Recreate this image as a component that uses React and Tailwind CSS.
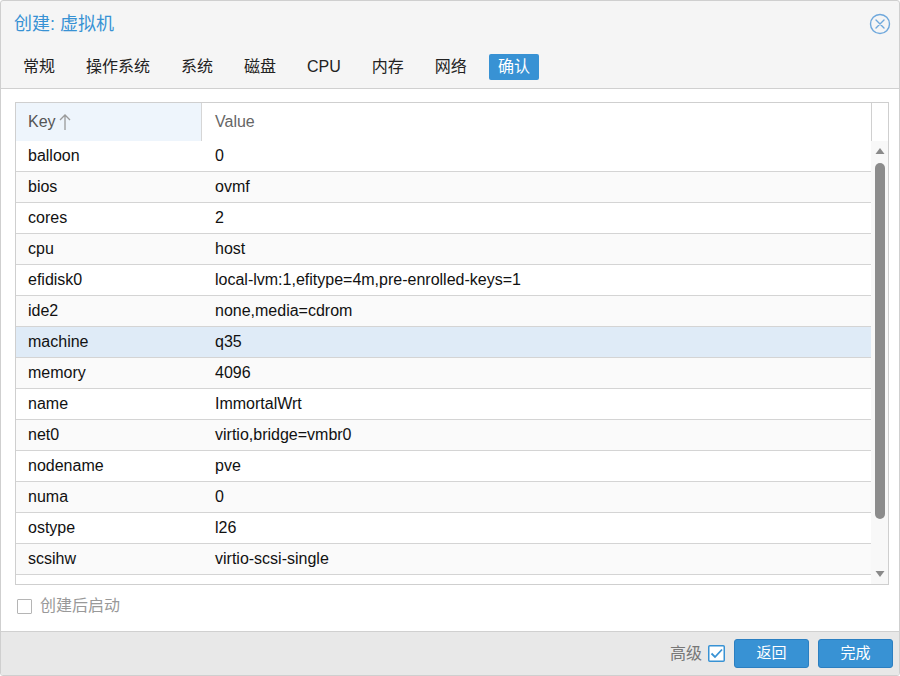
import { useState } from 'react'

const rows = [
  ['balloon', '0'],
  ['bios', 'ovmf'],
  ['cores', '2'],
  ['cpu', 'host'],
  ['efidisk0', 'local-lvm:1,efitype=4m,pre-enrolled-keys=1'],
  ['ide2', 'none,media=cdrom'],
  ['machine', 'q35'],
  ['memory', '4096'],
  ['name', 'ImmortalWrt'],
  ['net0', 'virtio,bridge=vmbr0'],
  ['nodename', 'pve'],
  ['numa', '0'],
  ['ostype', 'l26'],
  ['scsihw', 'virtio-scsi-single'],
]

const tabs = ['常规', '操作系统', '系统', '磁盘', 'CPU', '内存', '网络', '确认']

function CloseIcon() {
  return (
    <svg width="22" height="22" viewBox="0 0 22 22" fill="none">
      <circle cx="11" cy="11" r="9.5" stroke="#6fa8dc" strokeWidth="1.4" />
      <path d="M7 7 L15 15 M15 7 L7 15" stroke="#6fa8dc" strokeWidth="1.4" strokeLinecap="round" />
    </svg>
  )
}

export default function App() {
  const [selected] = useState(6)

  return (
    <div
      className="w-[900px] h-[676px] flex flex-col border border-[#cfcfcf] rounded-[3px] overflow-hidden bg-[#f5f5f5] text-[#000]"
      style={{ fontFamily: '"Liberation Sans", "Noto Sans CJK SC", sans-serif' }}
    >
      {/* header */}
      <div className="h-[87px] flex flex-col">
        <div className="h-[46px] flex items-center justify-between pl-[13px] pr-[8px]">
          <span className="text-[18px] text-[#3892d4]">创建: 虚拟机</span>
          <CloseIcon />
        </div>
        <div className="flex items-center gap-[13px] pl-[13px] h-[26px] mt-[7px]">
          {tabs.map((t, i) => (
            <span
              key={t}
              className={`h-[26px] px-[9px] flex items-center text-[16px] rounded-[2px] ${
                i === tabs.length - 1 ? 'bg-[#3892d4] text-white' : 'text-[#222]'
              }`}
            >
              {t}
            </span>
          ))}
        </div>
      </div>

      {/* body */}
      <div className="flex-1 bg-white border-t border-b border-[#d0d0d0] flex flex-col pl-[14px] pr-[10px] pt-[13px]">
        <div className="h-[483px] border border-[#cfcfcf] flex flex-col text-[16px]">
          <div className="h-[38px] flex shrink-0">
            <div className="w-[186px] bg-[#eef5fc] border-r border-[#d6d6d6] flex items-center pl-[12px] text-[#555]">
              Key
              <svg className="ml-[3px]" width="12" height="18" viewBox="0 0 12 18" fill="none">
                <path d="M6 2 V17 M1 7 L6 2 L11 7" stroke="#9a9a9a" strokeWidth="1.3" />
              </svg>
            </div>
            <div className="flex-1 flex items-center pl-[13px] text-[#666]">Value</div>
            <div className="w-[17px] border-l border-[#d0d0d0]" />
          </div>
          <div className="flex-1 flex overflow-hidden">
            <div className="flex-1 overflow-hidden">
              {rows.map(([k, v], i) => (
                <div
                  key={k}
                  className={`h-[31px] flex items-center border-b border-[#d4d4d4] ${
                    i === selected ? 'bg-[#dfebf7]' : i % 2 === 1 ? 'bg-[#fafafa]' : 'bg-white'
                  }`}
                >
                  <div className="w-[187px] pl-[12px] text-[#111]">{k}</div>
                  <div className="flex-1 pl-[12px] text-[#111]">{v}</div>
                </div>
              ))}
            </div>
            <div className="w-[17px] bg-[#f8f8f8] flex flex-col items-center pt-[6px]">
              <svg width="10" height="8" viewBox="0 0 10 8">
                <path d="M5 1 L9.5 7 H0.5 Z" fill="#8a8a8a" />
              </svg>
              <div className="w-[10px] h-[356px] mt-[8px] rounded-[5px] bg-[#8c8c8c]" />
              <div className="flex-1" />
              <svg className="mb-[6px]" width="10" height="8" viewBox="0 0 10 8">
                <path d="M0.5 1 H9.5 L5 7 Z" fill="#8a8a8a" />
              </svg>
            </div>
          </div>
        </div>
        <div className="flex items-center mt-[9px] ml-[2px] gap-[8px]">
          <span className="w-[15px] h-[15px] border border-[#b5b5b5] rounded-[1px] bg-white" />
          <span className="text-[16px] text-[#999]">创建后启动</span>
        </div>
      </div>

      {/* footer */}
      <div className="h-[43px] bg-[#e8e8e8] flex items-center justify-end pr-[6px] gap-[9px]">
        <div className="flex items-center gap-[6px]">
          <span className="text-[16px] text-[#777]">高级</span>
          <svg width="17" height="17" viewBox="0 0 17 17" fill="none">
            <rect x="0.75" y="0.75" width="15.5" height="15.5" rx="1" fill="white" stroke="#3892d4" strokeWidth="1.5" />
            <path d="M3.5 8.5 L7 12 L14 4.5" stroke="#3892d4" strokeWidth="1.8" />
          </svg>
        </div>
        <button className="w-[75px] h-[29px] bg-[#3892d4] border border-[#2b7fc1] rounded-[3px] text-white text-[15px]">
          返回
        </button>
        <button className="w-[75px] h-[29px] bg-[#3892d4] border border-[#2b7fc1] rounded-[3px] text-white text-[15px]">
          完成
        </button>
      </div>
    </div>
  )
}
